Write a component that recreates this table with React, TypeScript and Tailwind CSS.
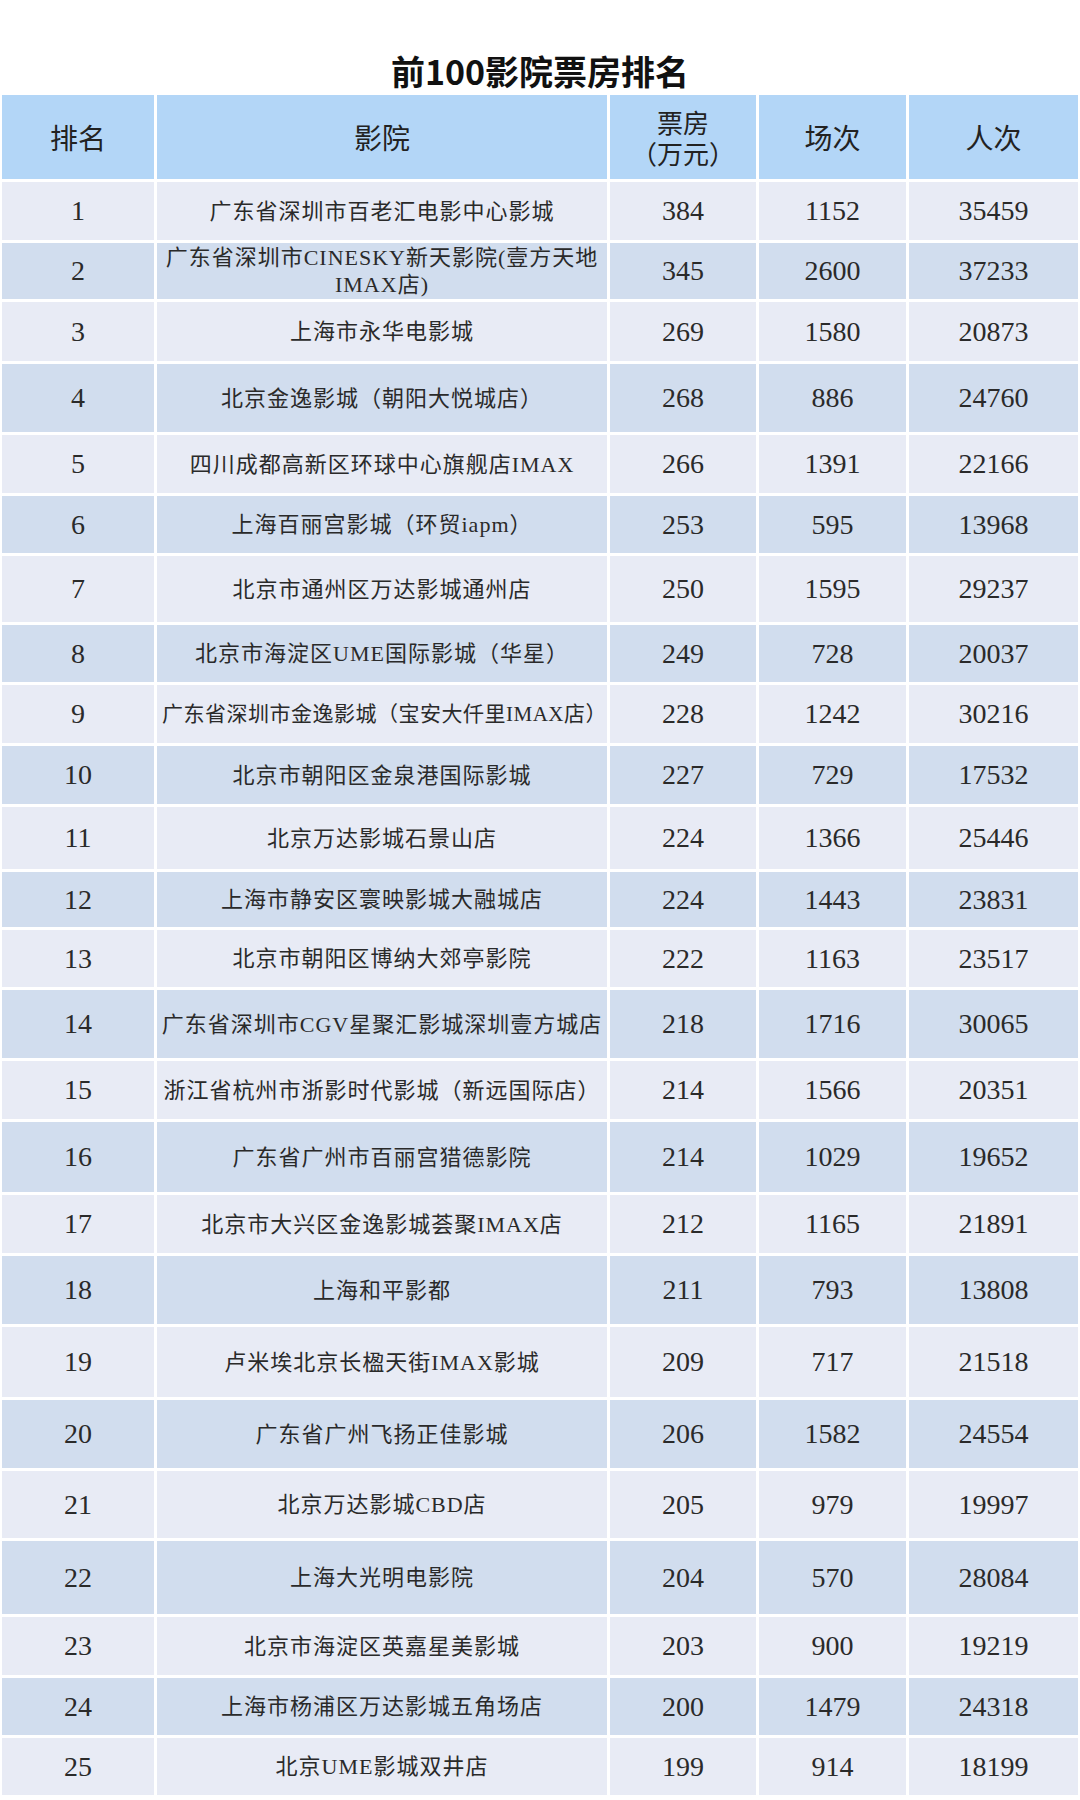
type Row = {
  rank: number
  name: React.ReactNode
  box: string
  shows: string
  people: string
  h: string
  nameCls?: string
}

const rows: Row[] = [
  { rank: 1, name: '广东省深圳市百老汇电影中心影城', box: '384', shows: '1152', people: '35459', h: 'h-[58px]' },
  {
    rank: 2,
    name: (
      <>
        广东省深圳市CINESKY新天影院(壹方天地
        <br />
        IMAX店)
      </>
    ),
    box: '345',
    shows: '2600',
    people: '37233',
    h: 'h-[56px]',
  },
  { rank: 3, name: '上海市永华电影城', box: '269', shows: '1580', people: '20873', h: 'h-[59px]' },
  { rank: 4, name: '北京金逸影城（朝阳大悦城店）', box: '268', shows: '886', people: '24760', h: 'h-[68px]' },
  { rank: 5, name: '四川成都高新区环球中心旗舰店IMAX', box: '266', shows: '1391', people: '22166', h: 'h-[58px]' },
  { rank: 6, name: '上海百丽宫影城（环贸iapm）', box: '253', shows: '595', people: '13968', h: 'h-[57px]' },
  { rank: 7, name: '北京市通州区万达影城通州店', box: '250', shows: '1595', people: '29237', h: 'h-[66px]' },
  { rank: 8, name: '北京市海淀区UME国际影城（华星）', box: '249', shows: '728', people: '20037', h: 'h-[57px]' },
  {
    rank: 9,
    name: '广东省深圳市金逸影城（宝安大仟里IMAX店）',
    box: '228',
    shows: '1242',
    people: '30216',
    h: 'h-[58px]',
    nameCls: 'justify-end text-[21px] tracking-[0.5px]',
  },
  { rank: 10, name: '北京市朝阳区金泉港国际影城', box: '227', shows: '729', people: '17532', h: 'h-[58px]' },
  { rank: 11, name: '北京万达影城石景山店', box: '224', shows: '1366', people: '25446', h: 'h-[62px]' },
  { rank: 12, name: '上海市静安区寰映影城大融城店', box: '224', shows: '1443', people: '23831', h: 'h-[55px]' },
  { rank: 13, name: '北京市朝阳区博纳大郊亭影院', box: '222', shows: '1163', people: '23517', h: 'h-[57px]' },
  { rank: 14, name: '广东省深圳市CGV星聚汇影城深圳壹方城店', box: '218', shows: '1716', people: '30065', h: 'h-[68px]' },
  { rank: 15, name: '浙江省杭州市浙影时代影城（新远国际店）', box: '214', shows: '1566', people: '20351', h: 'h-[58px]' },
  { rank: 16, name: '广东省广州市百丽宫猎德影院', box: '214', shows: '1029', people: '19652', h: 'h-[70px]' },
  { rank: 17, name: '北京市大兴区金逸影城荟聚IMAX店', box: '212', shows: '1165', people: '21891', h: 'h-[58px]' },
  { rank: 18, name: '上海和平影都', box: '211', shows: '793', people: '13808', h: 'h-[68px]' },
  { rank: 19, name: '卢米埃北京长楹天街IMAX影城', box: '209', shows: '717', people: '21518', h: 'h-[70px]' },
  { rank: 20, name: '广东省广州飞扬正佳影城', box: '206', shows: '1582', people: '24554', h: 'h-[68px]' },
  { rank: 21, name: '北京万达影城CBD店', box: '205', shows: '979', people: '19997', h: 'h-[67px]' },
  { rank: 22, name: '上海大光明电影院', box: '204', shows: '570', people: '28084', h: 'h-[73px]' },
  { rank: 23, name: '北京市海淀区英嘉星美影城', box: '203', shows: '900', people: '19219', h: 'h-[58px]' },
  { rank: 24, name: '上海市杨浦区万达影城五角场店', box: '200', shows: '1479', people: '24318', h: 'h-[57px]' },
  { rank: 25, name: '北京UME影城双井店', box: '199', shows: '914', people: '18199', h: 'h-[57px]' },
]

// column widths shared by header and body rows
const cols = 'grid grid-cols-[152px_450px_146px_147px_169px] gap-x-[3px]'

const App = () => {
  return (
    <div className="w-[1080px] h-[1800px] bg-white overflow-hidden">
      <div className="h-[95px] pt-[50px] text-center text-[34px] leading-[42px] font-bold text-[#111] font-['Noto_Sans_CJK_SC',sans-serif]">
        前100影院票房排名
      </div>
      <div className="flex flex-col gap-y-[3px] px-[2px]">
        <div className={`${cols} h-[84px] text-[28px] text-[#222] font-['Noto_Sans_CJK_SC',sans-serif]`}>
          <div className="bg-[#b3d6f7] flex items-center justify-center">排名</div>
          <div className="bg-[#b3d6f7] flex items-center justify-center">影院</div>
          <div className="bg-[#b3d6f7] flex items-center justify-center text-center text-[26px] leading-[31px]">
            <span>
              票房
              <br />
              （万元）
            </span>
          </div>
          <div className="bg-[#b3d6f7] flex items-center justify-center">场次</div>
          <div className="bg-[#b3d6f7] flex items-center justify-center">人次</div>
        </div>
        {rows.map((row) => {
          const bg = row.rank % 2 === 1 ? 'bg-[#e8ebf5]' : 'bg-[#d1ddee]'
          return (
            <div
              key={`cinema-${row.rank}`}
              className={`${cols} ${row.h} text-[#2a2a2a] font-['Liberation_Serif','Noto_Sans_CJK_SC',serif]`}
            >
              <div className={`${bg} flex items-center justify-center text-[28px]`}>{row.rank}</div>
              <div
                className={`${bg} flex items-center overflow-hidden leading-[27px] text-center whitespace-nowrap ${
                  row.nameCls ?? 'justify-center text-[22px] tracking-[1px]'
                }`}
              >
                <span>{row.name}</span>
              </div>
              <div className={`${bg} flex items-center justify-center text-[28px]`}>{row.box}</div>
              <div className={`${bg} flex items-center justify-center text-[28px]`}>{row.shows}</div>
              <div className={`${bg} flex items-center justify-center text-[28px]`}>{row.people}</div>
            </div>
          )
        })}
      </div>
    </div>
  )
}

export default App
